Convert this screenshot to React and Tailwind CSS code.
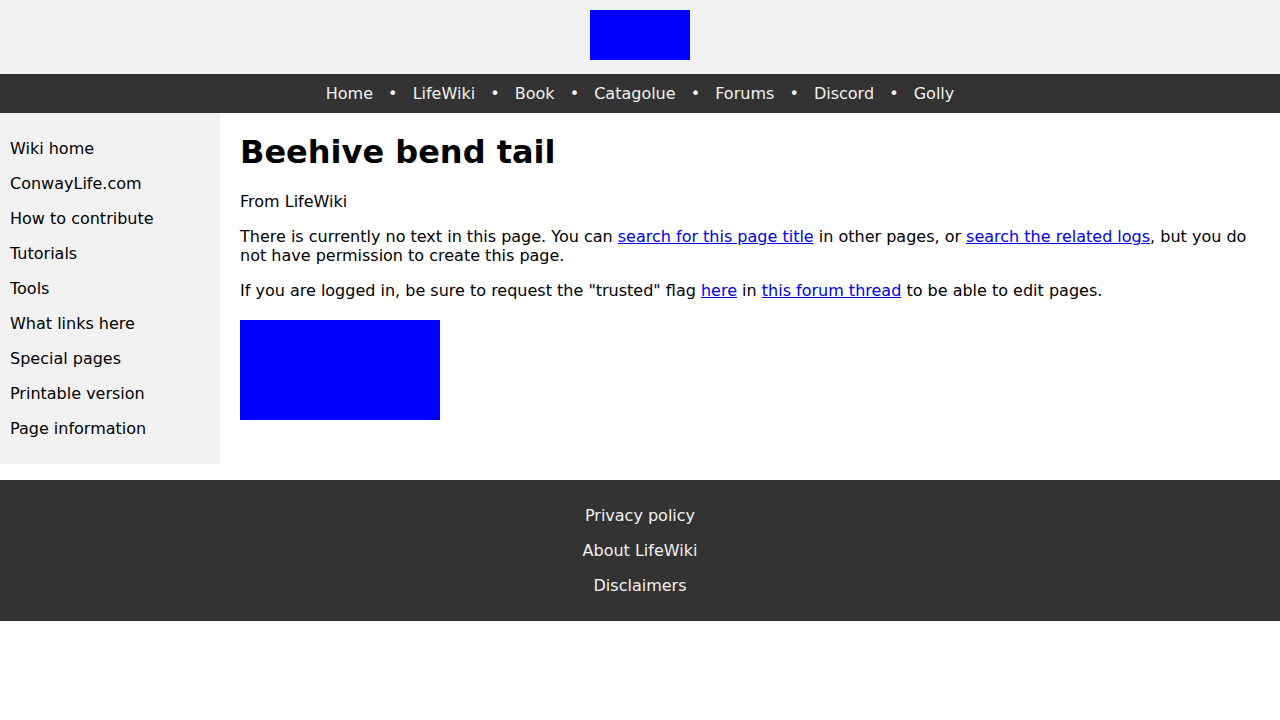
export default function App() {
  const nav = ["Home", "LifeWiki", "Book", "Catagolue", "Forums", "Discord", "Golly"];
  const side = [
    "Wiki home",
    "ConwayLife.com",
    "How to contribute",
    "Tutorials",
    "Tools",
    "What links here",
    "Special pages",
    "Printable version",
    "Page information",
  ];
  const foot = ["Privacy policy", "About LifeWiki", "Disclaimers"];
  return (
    <div className="bg-white text-black text-[16px] leading-[19px]" style={{ fontFamily: '"DejaVu Sans", sans-serif' }}>
      <header className="bg-[#f2f2f2] flex justify-center pt-[10px] pb-[14px]">
        <div className="w-[100px] h-[50px] bg-[#0000ff]" />
      </header>
      <nav className="bg-[#333333] text-[#f2f2f2] flex justify-center items-center py-[10px]">
        {nav.map((n, i) => (
          <div key={n} className="flex items-center">
            {i > 0 && <span className="mx-[15.1px]">•</span>}
            <a className="text-[#f2f2f2]">{n}</a>
          </div>
        ))}
      </nav>
      <div className="flex items-start">
        <aside className="w-[220px] shrink-0 bg-[#f2f2f2] py-[18px]">
          {side.map((s) => (
            <div key={s} className="px-[10px] py-[8px]">
              {s}
            </div>
          ))}
        </aside>
        <main className="flex-1 px-[20px] pt-[21px] pb-[20px]">
          <h1 className="text-[32px] leading-[37px] font-bold m-0">Beehive bend tail</h1>
          <p className="mt-[21px]">From LifeWiki</p>
          <p className="mt-[16px]">
            There is currently no text in this page. You can{" "}
            <a className="text-[#0000ee] underline">search for this page title</a> in other pages, or{" "}
            <a className="text-[#0000ee] underline">search the related logs</a>, but you do not have permission to
            create this page.
          </p>
          <p className="mt-[16px]">
            If you are logged in, be sure to request the "trusted" flag{" "}
            <a className="text-[#0000ee] underline">here</a> in{" "}
            <a className="text-[#0000ee] underline">this forum thread</a> to be able to edit pages.
          </p>
          <div className="mt-[20px] w-[200px] h-[100px] bg-[#0000ff]" />
        </main>
      </div>
      <footer className="mt-[16px] bg-[#333333] text-[#f2f2f2] py-[18px] flex flex-col items-center">
        {foot.map((f) => (
          <div key={f} className="py-[8px]">
            {f}
          </div>
        ))}
      </footer>
    </div>
  );
}
